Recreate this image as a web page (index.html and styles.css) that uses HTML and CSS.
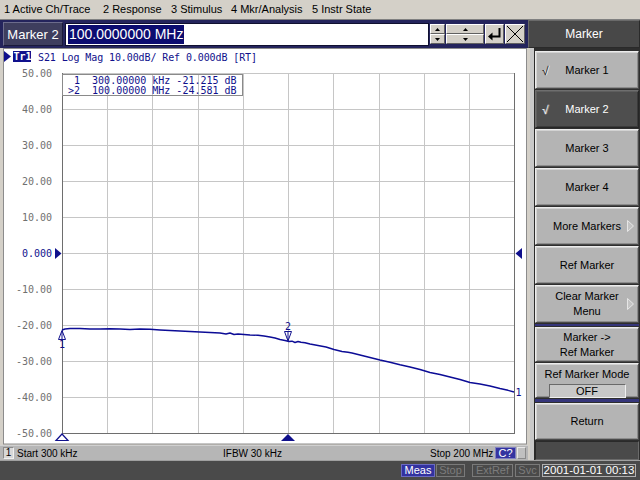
FILE: index.html
```html
<!DOCTYPE html>
<html>
<head>
<meta charset="utf-8">
<title>Marker</title>
<link rel="stylesheet" href="styles.css">
</head>
<body>
<div class="screen">
  <div class="menubar">
    <span class="mi mi1">1 Active Ch/Trace</span>
    <span class="mi mi2">2 Response</span>
    <span class="mi mi3">3 Stimulus</span>
    <span class="mi mi4">4 Mkr/Analysis</span>
    <span class="mi">5 Instr State</span>
  </div>
  <div class="main">
    <div class="leftcol">
      <div class="entry">
        <div class="entry-label">Marker 2</div>
        <div class="entry-field"><span class="sel">100.0000000 MHz</span></div>
        <div class="spin spin-s">
          <div class="sp"><svg width="5" height="3" viewBox="0 0 5 3"><path d="M2.5 0 L5 3 L0 3Z" fill="#000"/></svg></div>
          <div class="sp"><svg width="5" height="3" viewBox="0 0 5 3"><path d="M0 0 L5 0 L2.5 3Z" fill="#000"/></svg></div>
        </div>
        <div class="spin spin-w">
          <div class="sp"><svg width="5" height="3" viewBox="0 0 5 3"><path d="M2.5 0 L5 3 L0 3Z" fill="#000"/></svg></div>
          <div class="sp"><svg width="5" height="3" viewBox="0 0 5 3"><path d="M0 0 L5 0 L2.5 3Z" fill="#000"/></svg></div>
        </div>
        <div class="ebtn"><svg width="15" height="14" viewBox="0 0 15 14"><path d="M12.5 1 V9.5 H4" fill="none" stroke="#000" stroke-width="2"/><path d="M1 9.5 L5.5 5.5 L5.5 13.5Z" fill="#000"/></svg></div>
        <div class="ebtn"><svg width="18" height="18" viewBox="0 0 18 18"><path d="M1 1 L17 17 M17 1 L1 17" stroke="#000" stroke-width="1"/></svg></div>
      </div>
      <div class="chart">
        <svg class="plot" width="528" height="397" viewBox="0 48 528 397">
          <rect class="panel" x="3.5" y="48.5" width="523" height="395.5"/>
          <!-- header -->
          <path class="navyfill" d="M4 51 L11 56.5 L4 62Z"/>
          <rect class="navyfill" x="13" y="51" width="18" height="11"/>
          <text class="trlabel" x="13.5" y="60">Tr1</text>
          <text class="hdr" x="38" y="61" textLength="219" lengthAdjust="spacing">S21 Log Mag 10.00dB/ Ref 0.000dB [RT]</text>
          <!-- grid -->
          <g class="grid">
            <path d="M62 73.5 H514 M62 109.5 H514 M62 145.5 H514 M62 181.5 H514 M62 217.5 H514 M62 253.5 H514 M62 289.5 H514 M62 325.5 H514 M62 361.5 H514 M62 397.5 H514"/>
            <path d="M107.5 73 V433 M152.5 73 V433 M198.5 73 V433 M243.5 73 V433 M288.5 73 V433 M333.5 73 V433 M379.5 73 V433 M424.5 73 V433 M469.5 73 V433"/>
          </g>
          <path class="frame" d="M62.5 73 V433.5 H514.5 V73"/>
          <!-- marker readout -->
          <rect class="rbox" x="62.5" y="74.5" width="180" height="21"/>
          <text class="hdr" x="68" y="84" xml:space="preserve"> 1  300.00000 kHz -21.215 dB</text>
          <text class="hdr" x="68" y="93.5" xml:space="preserve">&gt;2  100.00000 MHz -24.581 dB</text>
          <!-- y axis labels -->
          <text class="ax" x="52" y="77">50.00</text>
          <text class="ax" x="52" y="113">40.00</text>
          <text class="ax" x="52" y="149">30.00</text>
          <text class="ax" x="52" y="185">20.00</text>
          <text class="ax" x="52" y="221">10.00</text>
          <text class="ax ax0" x="52" y="257">0.000</text>
          <text class="ax" x="52" y="293">-10.00</text>
          <text class="ax" x="52" y="329">-20.00</text>
          <text class="ax" x="52" y="365">-30.00</text>
          <text class="ax" x="52" y="401">-40.00</text>
          <text class="ax" x="52" y="437">-50.00</text>
          <!-- reference arrows -->
          <path class="navyfill" d="M55 248 L61.5 253.5 L55 259Z"/>
          <path class="navyfill" d="M522 248 L515.5 253.5 L522 259Z"/>
          <!-- trace -->
          <polyline class="trace" points="62,330 65,329 70,328.5 80,328.5 90,329 100,329 110,328.8 120,329 130,329.5 140,329 150,329.3 160,330 170,330.5 180,331 190,331.5 200,332 210,332.5 220,333 226,334 230,333 234,334.5 238,334 244,334.5 250,335 258,335.3 264,336 270,337 275,338 280,339.5 285,340.5 289,341.5 292,341.2 295,342.5 298,341.5 301,342.3 305,342.8 310,344 318,345.5 326,347 334,349.5 342,351.5 348,352.3 352,353 360,355 370,357.5 380,360 390,362.2 400,364.8 410,367 420,369.5 430,372.5 440,374.5 450,377 460,379.5 470,382.5 480,384 490,386 500,388.5 508,390.3 514,392"/>
          <!-- markers -->
          <path class="mk" d="M62 330.5 L65.5 339.5 L58.5 339.5Z M62 331 V339.5"/>
          <text class="mknum" x="59" y="348">1</text>
          <path class="mk" d="M284.5 331.5 L291.5 331.5 L288 341Z M288 331.5 V341"/>
          <text class="mknum" x="285" y="330">2</text>
          <text class="mknum" x="515.5" y="395.5">1</text>
          <!-- stimulus markers -->
          <path class="mkb" d="M56 440.5 L62 434 L68 440.5Z"/>
          <path class="navyfill" d="M281 441 L288 434 L295 441Z"/>
        </svg>
      </div>
      <div class="chstatus">
        <span class="chnum">1</span>
        <span class="cs-start">Start 300 kHz</span>
        <span class="cs-ifbw">IFBW 30 kHz</span>
        <span class="cs-stop">Stop 200 MHz</span>
        <span class="cs-c">C?</span>
        <span class="cs-box"></span>
      </div>
    </div>
    <div class="rightcol">
      <div class="rc-title">Marker</div>
      <div class="rc-body">
        <div class="strip"></div>
        <div class="keys">
          <div class="key"><span class="chk">&#8730;</span>Marker 1</div>
          <div class="key key-on"><span class="chk">&#8730;</span>Marker 2</div>
          <div class="key">Marker 3</div>
          <div class="key">Marker 4</div>
          <div class="key">More Markers<span class="arr"><svg width="7" height="12" viewBox="0 0 7 12"><path d="M0.5 0.5 L6.5 6 L0.5 11.5Z" fill="#c4c4c4" stroke="#e6e6e6"/></svg></span></div>
          <div class="key">Ref Marker</div>
          <div class="key key-2l">Clear Marker<br>Menu<span class="arr"><svg width="7" height="12" viewBox="0 0 7 12"><path d="M0.5 0.5 L6.5 6 L0.5 11.5Z" fill="#c4c4c4" stroke="#e6e6e6"/></svg></span></div>
          <div class="sep sep-a"></div>
          <div class="key key-2l key-s">Marker -&gt;<br>Ref Marker</div>
          <div class="key key-s key-mode"><span>Ref Marker Mode</span><span class="modeval">OFF</span></div>
          <div class="sep sep-b"></div>
          <div class="key key-ret">Return</div>
          <div class="darkbox"></div>
        </div>
      </div>
    </div>
  </div>
  <div class="statusbar">
    <span class="sb sb-meas">Meas</span>
    <span class="sb sb-stop">Stop</span>
    <span class="sb sb-ext">ExtRef</span>
    <span class="sb sb-svc">Svc</span>
    <span class="sb sb-date">2001-01-01 00:13</span>
  </div>
</div>
</body>
</html>
```

FILE: styles.css
```css
* { box-sizing: border-box; margin: 0; padding: 0; }
html, body { width: 640px; height: 480px; overflow: hidden; }
body {
  background: #d4d0c8;
  font-family: "Liberation Sans", Arial, sans-serif;
  font-size: 11px;
  color: #000;
}
.screen { width: 640px; height: 480px; display: flex; flex-direction: column; }

/* menu bar */
.menubar {
  height: 20px;
  display: flex;
  align-items: center;
  padding: 0 0 1px 4px;
  border-bottom: 1px solid #808080;
  background: #d4d0c8;
  font-size: 11px;
  white-space: nowrap;
}
.mi1 { width: 99px; }
.mi2 { width: 68px; }
.mi3 { width: 60px; }
.mi4 { width: 81px; }

.main { height: 440px; display: flex; }

.leftcol { width: 528px; display: flex; flex-direction: column; }

/* entry bar */
.entry {
  height: 28px;
  background: #24245c;
  display: flex;
  align-items: center;
  padding: 0 3px;
}
.entry-label {
  width: 60px;
  height: 24px;
  background: #3e3e5e;
  border: 1px solid #6c6c8c;
  border-right-color: #1a1a3a;
  border-bottom-color: #1a1a3a;
  color: #fff;
  font-size: 13px;
  display: flex;
  align-items: center;
  justify-content: center;
}
.entry-field {
  width: 364px;
  height: 23px;
  margin-left: 2px;
  background: #fff;
  border: 1px solid #101030;
  padding-left: 2px;
  display: flex;
  align-items: center;
}
.sel {
  background: #0c0c70;
  color: #fff;
  font-size: 14px;
  line-height: 19px;
  padding: 0 1px;
}
.spin {
  height: 20px;
  margin-left: 1px;
  display: flex;
  flex-direction: column;
}
.spin-s { width: 15px; }
.spin-w { width: 38px; }
.sp {
  flex: 1;
  background: #d4d0c8;
  border: 1px solid;
  border-color: #ffffff #606060 #606060 #ffffff;
  display: flex;
  align-items: center;
  justify-content: center;
}
.ebtn {
  width: 19px;
  height: 20px;
  margin-left: 1px;
  background: #d4d0c8;
  border: 1px solid;
  border-color: #ffffff #606060 #606060 #ffffff;
  display: flex;
  align-items: center;
  justify-content: center;
}
.ebtn + .ebtn { width: 20px; }

/* chart */
.chart { height: 397px; }
.plot { display: block; }
.panel { fill: #ffffff; stroke: #8c8c8c; stroke-width: 1; }
.navyfill { fill: #10108c; }
.trlabel { font: bold 10px "DejaVu Sans Mono", monospace; fill: #ffffff; }
.hdr { font: 10px "DejaVu Sans Mono", monospace; fill: #10108c; white-space: pre; }
.grid path { stroke: #c6c6c6; stroke-width: 1; fill: none; shape-rendering: crispEdges; }
.frame { stroke: #6e6e6e; stroke-width: 1; fill: none; shape-rendering: crispEdges; }
.rbox { fill: none; stroke: #8a8a8a; stroke-width: 1; shape-rendering: crispEdges; }
.ax { font: 10px "DejaVu Sans Mono", monospace; fill: #707070; text-anchor: end; }
.ax0 { fill: #10108c; }
.trace { fill: none; stroke: #0c0c96; stroke-width: 1.4; stroke-linejoin: round; }
.mk { fill: #ffffff; stroke: #10108c; stroke-width: 1; }
.mkb { fill: #ffffff; stroke: #10108c; stroke-width: 1.2; }
.mknum { font: 10px "DejaVu Sans Mono", monospace; fill: #10108c; }

/* channel status */
.chstatus {
  height: 15px;
  background: #b6b6b6;
  border-top: 1px solid #d0d0d0;
  display: flex;
  align-items: center;
  padding-left: 3px;
  white-space: nowrap;
  font-size: 10px;
}
.chnum {
  width: 11px;
  height: 12px;
  background: #d8d8d8;
  border: 1px solid;
  border-color: #8a8a8a #f0f0f0 #f0f0f0 #8a8a8a;
  font-size: 10px;
  line-height: 10px;
  text-align: center;
}
.cs-start { margin-left: 3px; width: 206px; }
.cs-ifbw { width: 207px; }
.cs-stop { width: 65px; }
.cs-c {
  width: 21px;
  height: 12px;
  background: #3434a0;
  color: #fff;
  text-align: center;
  line-height: 10px;
  font-size: 11px;
  border: 1px solid #8080c0;
}
.cs-box {
  width: 9px;
  height: 12px;
  margin-left: 1px;
  background: #c0c0c0;
  border: 1px solid;
  border-color: #e8e8e8 #8a8a8a #8a8a8a #e8e8e8;
}

/* right column */
.rightcol { width: 112px; display: flex; flex-direction: column; }
.rc-title {
  height: 28px;
  background: #484848;
  border: 1px solid;
  border-color: #6a6a6a #2a2a2a #2a2a2a #6a6a6a;
  color: #fff;
  font-size: 12px;
  display: flex;
  align-items: center;
  justify-content: center;
}
.rc-body { height: 412px; display: flex; background: #2e2e2e; }
.strip {
  width: 7px;
  background: #c8c8c8;
  border-left: 2px solid #d4d0c8;
  border-right: 1px solid #2a2a2a;
}
.keys {
  width: 104px;
  padding-top: 3px;
  display: flex;
  flex-direction: column;
  gap: 1px;
}
.key {
  position: relative;
  height: 38px;
  flex: none;
  background: #b4b4b4;
  border: 1px solid;
  border-color: #ececec #4a4a4a #4a4a4a #ececec;
  box-shadow: inset 1px 1px 0 #d2d2d2, inset -1px -1px 0 #8c8c8c;
  display: flex;
  align-items: center;
  justify-content: center;
  text-align: center;
  font-size: 11px;
  line-height: 15px;
}
.key-on {
  background: #4e4e4e;
  color: #fff;
  border-color: #6e6e6e #262626 #262626 #6e6e6e;
  box-shadow: inset 1px 1px 0 #5e5e5e, inset -1px -1px 0 #3a3a3a;
}
.key-s { height: 35px; }
.key-ret { height: 37px; }
.key-2l { flex-direction: column; }
.key-mode { flex-direction: column; justify-content: flex-start; padding-top: 3px; }
.modeval {
  margin-top: 2px;
  width: 77px;
  height: 14px;
  background: #c8c8c8;
  border: 1px solid;
  border-color: #6a6a6a #f0f0f0 #f0f0f0 #6a6a6a;
  line-height: 12px;
}
.chk {
  position: absolute;
  left: 6px;
  top: 12px;
  font-size: 12px;
  font-style: italic;
  color: #1a1a1a;
  text-shadow: 1px 0 0 #f4f4f4;
}
.key-on .chk { color: #ffffff; text-shadow: 1px 0 0 #9a9a9a; }
.arr { position: absolute; right: 4px; top: 12px; display: flex; }
.sep { flex: none; background: #35357a; }
.sep-a { height: 2px; }
.sep-b { height: 3px; }
.darkbox {
  height: 19px;
  flex: none;
  background: #4a4a4a;
  border: 1px solid;
  border-color: #2a2a2a #6a6a6a #6a6a6a #2a2a2a;
}

/* status bar */
.statusbar {
  height: 20px;
  background: #4a4a4a;
  border-top: 1px solid #a0a0a0;
  display: flex;
  align-items: center;
  padding-left: 401px;
  white-space: nowrap;
}
.sb {
  height: 13px;
  font-size: 11px;
  line-height: 11px;
  text-align: center;
  border: 1px solid #7a7a7a;
  color: #7c7c7c;
  overflow: hidden;
}
.sb-meas { width: 34px; background: #3232a0; color: #fff; border-color: #6a6ac0; }
.sb-stop { width: 29px; margin-left: 1px; }
.sb-ext { width: 41px; margin-left: 7px; }
.sb-svc { width: 25px; margin-left: 2px; }
.sb-date { width: 94px; margin-left: 2px; color: #fff; border-color: #b0b0b0; font-size: 11.5px; overflow: visible; }
```
